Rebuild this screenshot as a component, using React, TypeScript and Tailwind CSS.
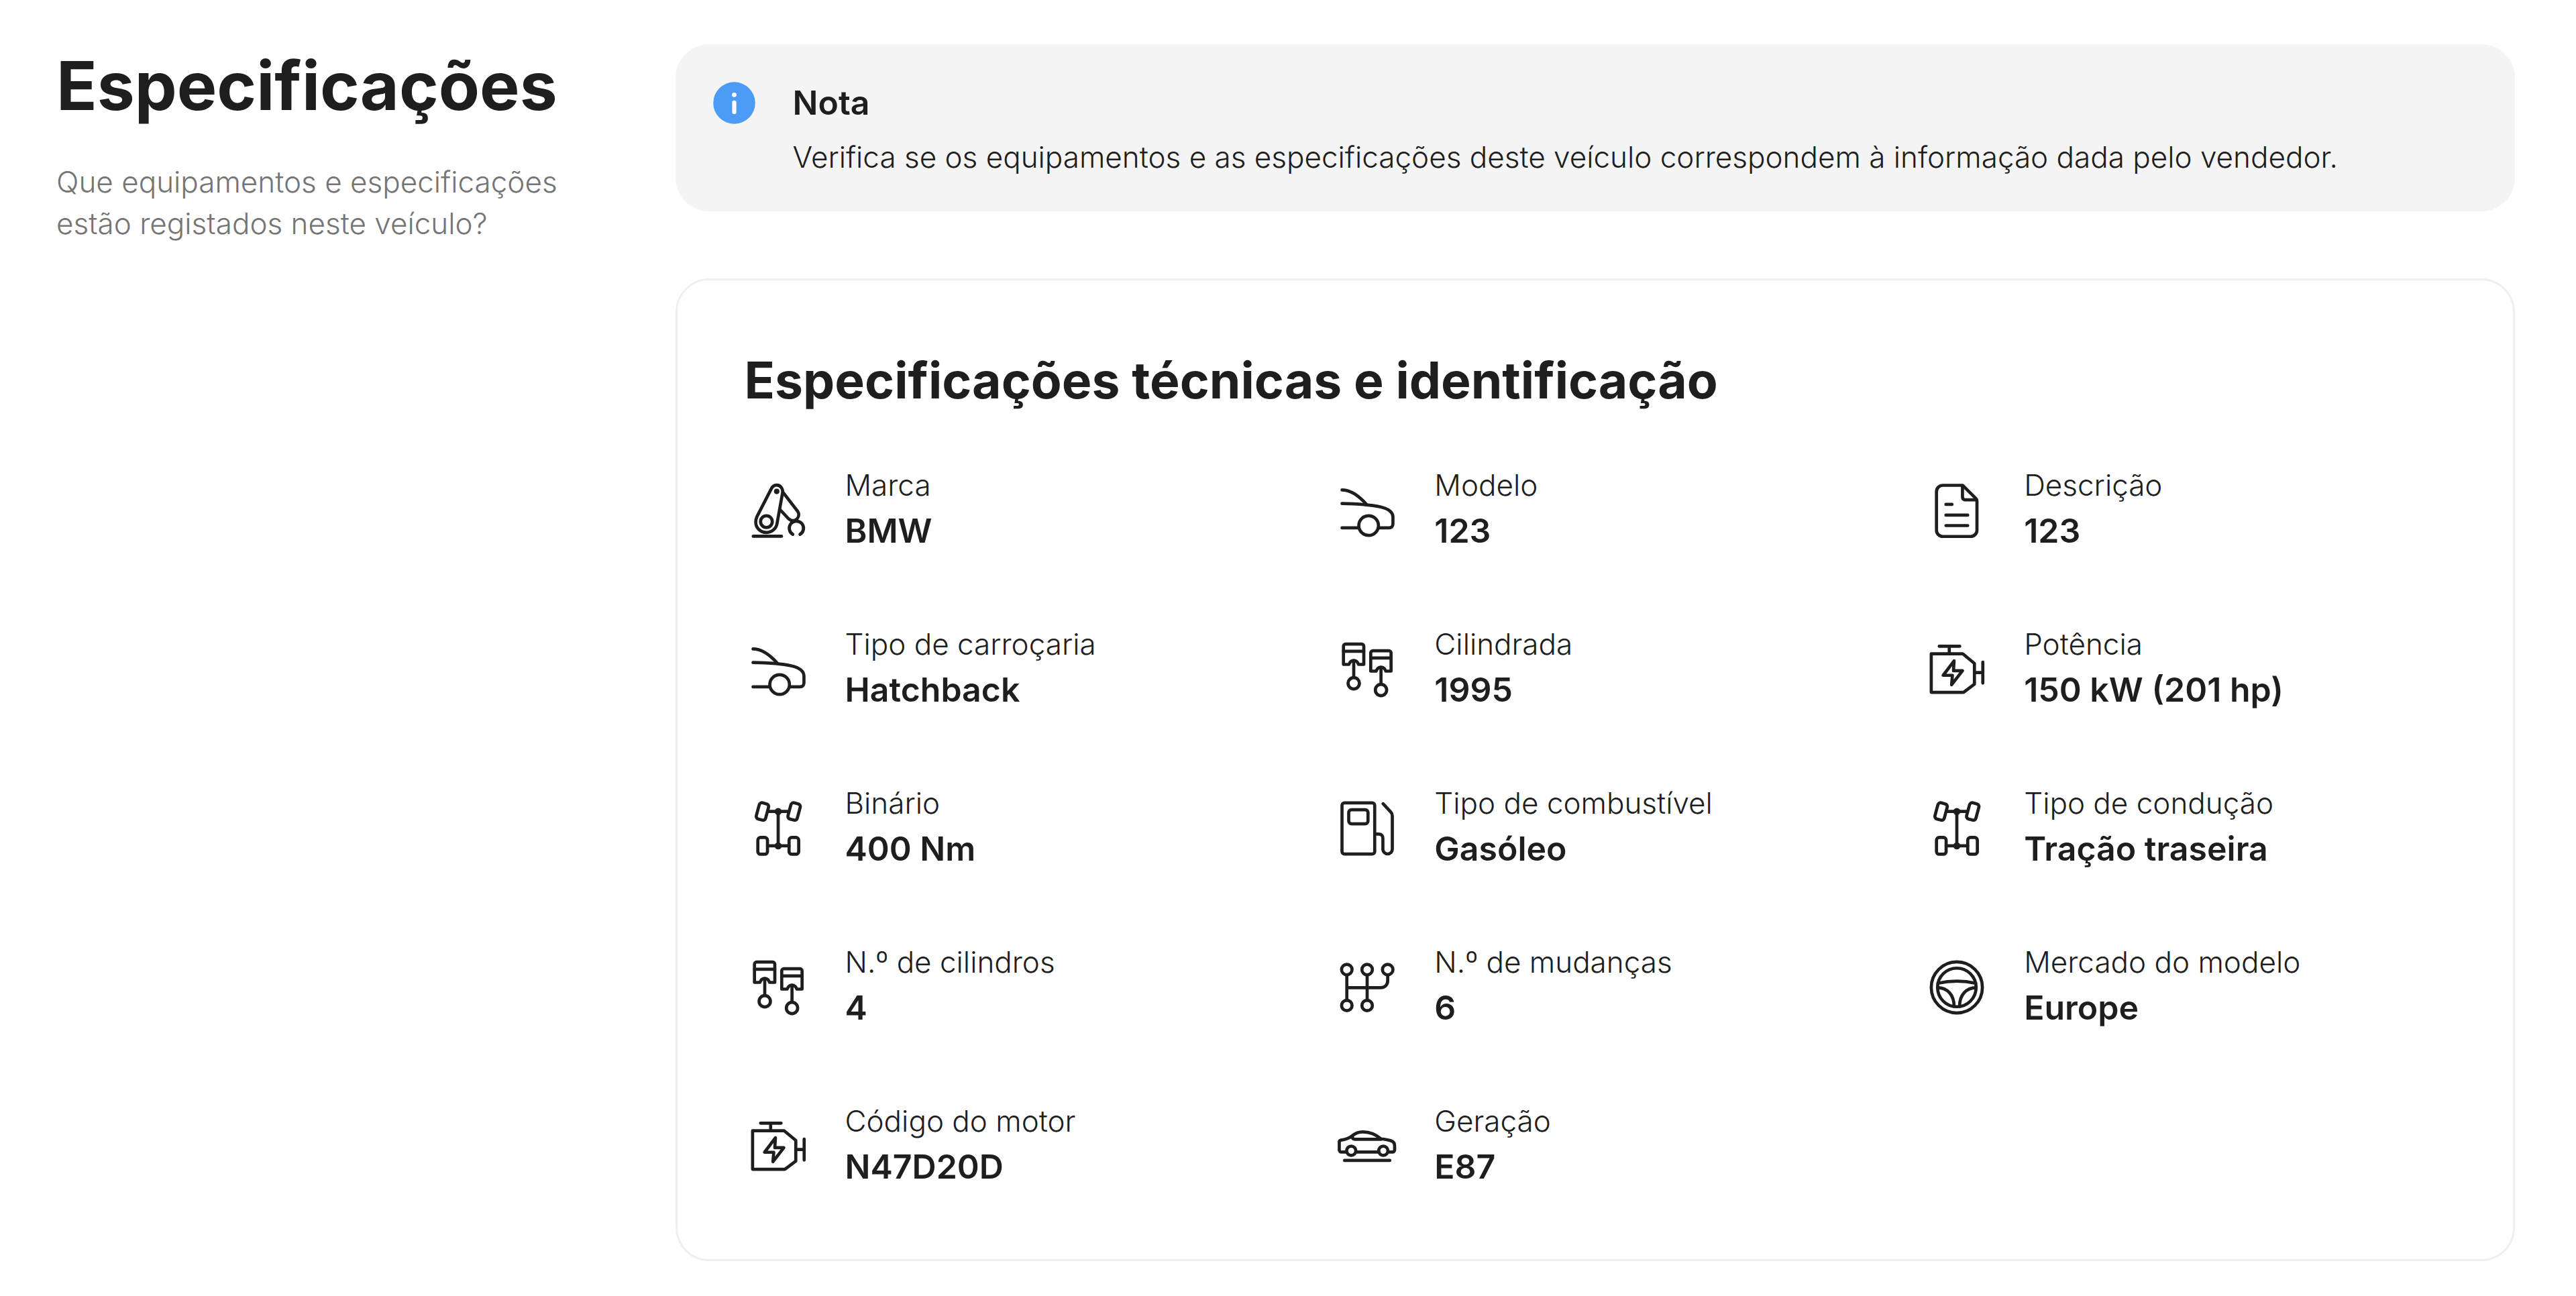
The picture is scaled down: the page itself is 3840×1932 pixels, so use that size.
import type { ReactNode } from "react";

interface Spec {
  label: string;
  value: string;
  icon: ReactNode;
}

function Icon({ children }: { children: ReactNode }) {
  return (
    <svg
      viewBox="0 0 32 32"
      fill="none"
      stroke="currentColor"
      strokeWidth="1.5"
      strokeLinecap="round"
      strokeLinejoin="round"
      className="size-[100px] shrink-0"
      aria-hidden="true"
    >
      {children}
    </svg>
  );
}

function RobotArmIcon() {
  return (
    <Icon>
      <path d="M4.1 28.3h13.5" />
      <circle cx="10.4" cy="21.3" r="2.8" />
      <circle cx="15.3" cy="6.9" r="1.3" fill="currentColor" stroke="none" />
      <path d="M12.6 5.9 5.9 18.9c-.4.9-.6 1.7-.6 2.6 0 2.8 2.2 5 5.1 5 2.6 0 4.8-1.9 5.1-4.5l2.6-14.4c.3-2-1-3.7-2.8-3.7-1.2 0-2.2.8-2.7 2Z" />
      <path d="m18.3 7.3 7 9.1c.8 1.2.6 2.7-.4 3.7-1.2 1-2.8.9-3.9-.1l-4.1-4.4" />
      <path d="M23 27.4a3.4 3.4 0 1 1 3.4 0" />
    </Icon>
  );
}

function HatchIcon() {
  return (
    <Icon>
      <path d="M4 6.2c4.5 0 8.1 2.9 11.5 6.7" />
      <path d="M4 12.7c7 .1 13.5.5 18.5 1.6 3.8.9 5.8 2.5 5.8 4.9v3.2c0 1.2-.7 1.9-1.9 1.9h-4.7" />
      <path d="M4 24.3h7.9" />
      <circle cx="16.7" cy="23.2" r="4.7" />
    </Icon>
  );
}

function DocumentIcon() {
  return (
    <Icon>
      <path d="M18.5 4H9.3a3 3 0 0 0-3 3v18.4a3 3 0 0 0 3 3h13.3a3 3 0 0 0 3-3V11.5c0-.5-.2-.9-.5-1.2L19 4.2A1 1 0 0 0 18.5 4Z" />
      <path d="M18.7 4.2v5.4c0 .8.5 1.3 1.3 1.3h5.4" />
      <path d="M10.8 13.1h2.9M10.8 18.2h10.4M10.8 23.2h10.4" />
    </Icon>
  );
}

function PistonsIcon() {
  const piston = (
    <>
      <path d="M5.7 3.9h7.7a1 1 0 0 1 1 1v8.7h-2.5c-.4-1.2-1.2-1.9-2.3-1.9s-1.9.7-2.3 1.9H4.7V4.9a1 1 0 0 1 1-1Z" />
      <path d="M4.7 7.3h9.7M9.6 11.8v8" />
      <circle cx="9.6" cy="22.6" r="2.7" />
    </>
  );

  return (
    <Icon>
      {piston}
      <g transform="translate(13 3.2)">{piston}</g>
    </Icon>
  );
}

function EngineIcon() {
  return (
    <Icon>
      <path d="M7.6 4.9h9.8M12.4 4.9v3.6" />
      <path d="M3.8 8.5h15l5.6 4.6v9.9l-5.2 3.9H3.8V8.5Z" />
      <path d="M24.4 17.5h4M28.4 12.5v10" />
      <path d="m14.7 11.9-5.2 6.9h4.4l-.4 4.5 5.2-6.7h-4.3l.3-4.7Z" />
    </Icon>
  );
}

function AxlesIcon() {
  return (
    <Icon>
      <rect x="6.2" y="3.9" width="4.6" height="8" rx="1.3" transform="rotate(15 8.5 7.9)" />
      <rect x="21.3" y="3.9" width="4.6" height="8" rx="1.3" transform="rotate(15 23.6 7.9)" />
      <rect x="6.3" y="20.3" width="4.6" height="8" rx="1.3" />
      <rect x="21.2" y="20.3" width="4.6" height="8" rx="1.3" />
      <path d="M11.3 7.9h9.3M10.9 24.3h10.3M16 7.9v16.4" />
      <circle cx="16" cy="7.9" r="1.7" fill="currentColor" stroke="none" />
      <circle cx="16" cy="24.3" r="1.7" fill="currentColor" stroke="none" />
    </Icon>
  );
}

function FuelIcon() {
  return (
    <Icon>
      <rect x="4" y="3.8" width="15.6" height="24.4" rx="1.2" />
      <rect x="7.2" y="7.1" width="9.2" height="6.7" rx="1.3" />
      <path d="m23.6 4.2 3.7 4c.5.5.7 1.1.7 1.8v15.9a2.2 2.2 0 0 1-4.5 0v-5.2c0-1.3-.8-2-2-2h-1.9" />
    </Icon>
  );
}

function GearboxIcon() {
  return (
    <Icon>
      <circle cx="6.3" cy="7.5" r="2.5" />
      <circle cx="16" cy="7.5" r="2.5" />
      <circle cx="25.8" cy="7.5" r="2.5" />
      <circle cx="6.3" cy="24.6" r="2.5" />
      <circle cx="16" cy="24.6" r="2.5" />
      <path d="M6.3 10v12.1M16 10v12.1M6.3 16.1h16.2c2 0 3.3-1.4 3.3-3.3V10" />
    </Icon>
  );
}

function SteeringWheelIcon() {
  return (
    <Icon>
      <circle cx="16" cy="16" r="12.2" />
      <circle cx="16" cy="16" r="9.2" />
      <path d="M7 14c6-1.3 12-1.3 18 0" />
      <path d="M6.8 16.1c4.7 0 7.9 3.5 7.9 9M25.2 16.1c-4.7 0-7.9 3.5-7.9 9" />
    </Icon>
  );
}

function CarIcon() {
  return (
    <Icon>
      <path d="M6 18.7H3.7a1 1 0 0 1-1-1v-3.8c0-.5.3-.8.8-.9 2-.3 3.7-.8 5.3-2 1.5-1.2 2.9-1.9 5-1.9 3.7 0 6.3 1.2 8.8 3.3 1.7.2 3.2.4 4.7.9 1.1.4 1.8 1.1 1.8 2.2v2.2a1 1 0 0 1-1 1h-2.1M11 18.7h10" />
      <path d="M9.1 10.9c-.4.9 0 1.7 1.1 1.7h12.4" />
      <circle cx="8.4" cy="18.1" r="2.2" />
      <circle cx="23.7" cy="18.1" r="2.2" />
      <path d="M5.2 22.7h21.6" />
    </Icon>
  );
}

function InfoIcon() {
  return (
    <svg viewBox="0 0 24 24" className="size-[75px] shrink-0 text-[#4c9bf5]" aria-hidden="true">
      <circle cx="12" cy="12" r="10" fill="currentColor" />
      <circle cx="12" cy="8.1" r="1.1" fill="white" />
      <path d="M12 11.8v4.5" stroke="white" strokeWidth="2" strokeLinecap="round" />
    </svg>
  );
}

const specs: Spec[] = [
  { label: "Marca", value: "BMW", icon: <RobotArmIcon /> },
  { label: "Modelo", value: "123", icon: <HatchIcon /> },
  { label: "Descrição", value: "123", icon: <DocumentIcon /> },
  { label: "Tipo de carroçaria", value: "Hatchback", icon: <HatchIcon /> },
  { label: "Cilindrada", value: "1995", icon: <PistonsIcon /> },
  { label: "Potência", value: "150 kW (201 hp)", icon: <EngineIcon /> },
  { label: "Binário", value: "400 Nm", icon: <AxlesIcon /> },
  { label: "Tipo de combustível", value: "Gasóleo", icon: <FuelIcon /> },
  { label: "Tipo de condução", value: "Tração traseira", icon: <AxlesIcon /> },
  { label: "N.º de cilindros", value: "4", icon: <PistonsIcon /> },
  { label: "N.º de mudanças", value: "6", icon: <GearboxIcon /> },
  { label: "Mercado do modelo", value: "Europe", icon: <SteeringWheelIcon /> },
  { label: "Código do motor", value: "N47D20D", icon: <EngineIcon /> },
  { label: "Geração", value: "E87", icon: <CarIcon /> },
];

function SpecItem({ label, value, icon }: Spec) {
  return (
    <li className="flex items-center gap-[50px]">
      {icon}
      <div className="min-w-0">
        <p className="text-[44px] leading-[62px] font-light">{label}</p>
        <p className="text-[50px] leading-[75px] font-semibold">{value}</p>
      </div>
    </li>
  );
}

export default function App() {
  return (
    <main className="grid min-h-screen grid-cols-4 items-start gap-[25px] bg-white pt-[66px] pr-[91px] pb-[52px] pl-[84px] font-['Inter',sans-serif] text-[#1e1e1e]">
      <header className="pr-[75px]">
        <h1 className="text-[100px] leading-[124px] font-bold">Especificações</h1>
        <p className="mt-[50px] text-[44px] leading-[62px] font-light text-[#757575]">
          Que equipamentos e especificações estão registados neste veículo?
        </p>
      </header>

      <div className="col-span-3 flex flex-col gap-[100px]">
        <aside className="flex gap-[50px] rounded-[50px] bg-[#f4f4f4] p-[50px]">
          <InfoIcon />
          <div>
            <h2 className="text-[50px] leading-[75px] font-semibold">Nota</h2>
            <p className="mt-3 text-[44px] leading-[62px] font-light">
              Verifica se os equipamentos e as especificações deste veículo
              correspondem à informação dada pelo vendedor.
            </p>
          </div>
        </aside>

        <section className="rounded-[50px] border-3 border-[#efefef] p-[100px]">
          <h2 className="text-[75px] leading-[98px] font-bold">
            Especificações técnicas e identificação
          </h2>
          <ul className="mt-[76px] grid grid-cols-3 gap-[100px]">
            {specs.map((spec) => (
              <SpecItem key={spec.label} {...spec} />
            ))}
          </ul>
        </section>
      </div>
    </main>
  );
}
